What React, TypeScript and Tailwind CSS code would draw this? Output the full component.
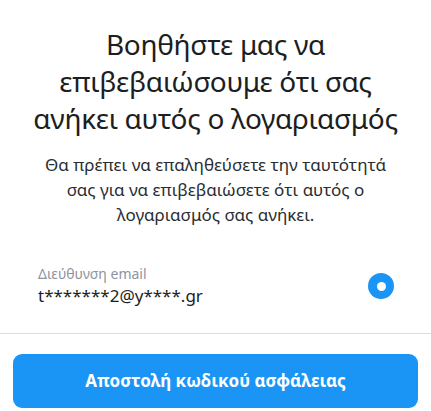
import React from "react";

export default function App() {
  return (
    <div className="w-[431px] h-[411px] bg-white overflow-hidden flex flex-col font-['Noto_Sans',sans-serif]">
      <h1 className="pt-[26px] text-center text-[28px] leading-[37px] text-[#1c1e21] font-normal tracking-[-0.3px]">
        Βοηθήστε μας να
        <br />
        επιβεβαιώσουμε ότι σας
        <br />
        ανήκει αυτός ο λογαριασμός
      </h1>
      <p className="mt-[15px] text-center text-[17px] leading-[25px] text-[#2a2d31]">
        Θα πρέπει να επαληθεύσετε την ταυτότητά
        <br />
        σας για να επιβεβαιώσετε ότι αυτός ο
        <br />
        λογαριασμός σας ανήκει.
      </p>
      <div className="mt-[37px] flex items-center justify-between pl-[38px] pr-[37px] pb-[25px] border-b border-[#dadde1]">
        <div className="flex flex-col">
          <span className="text-[14px] leading-[20px] text-[#8d949e]">Διεύθυνση email</span>
          <span className="text-[17px] leading-[24px] text-[#1c1e21]">t*******2@y****.gr</span>
        </div>
        <div className="w-[26px] h-[26px] rounded-full bg-[#1b95f5] flex items-center justify-center">
          <div className="w-[9px] h-[9px] rounded-full bg-white" />
        </div>
      </div>
      <div className="px-[13px] pt-[20px]">
        <button className="w-full h-[54px] rounded-[9px] bg-[#1b95f5] text-white font-bold text-[17px]">
          Αποστολή κωδικού ασφάλειας
        </button>
      </div>
    </div>
  );
}
